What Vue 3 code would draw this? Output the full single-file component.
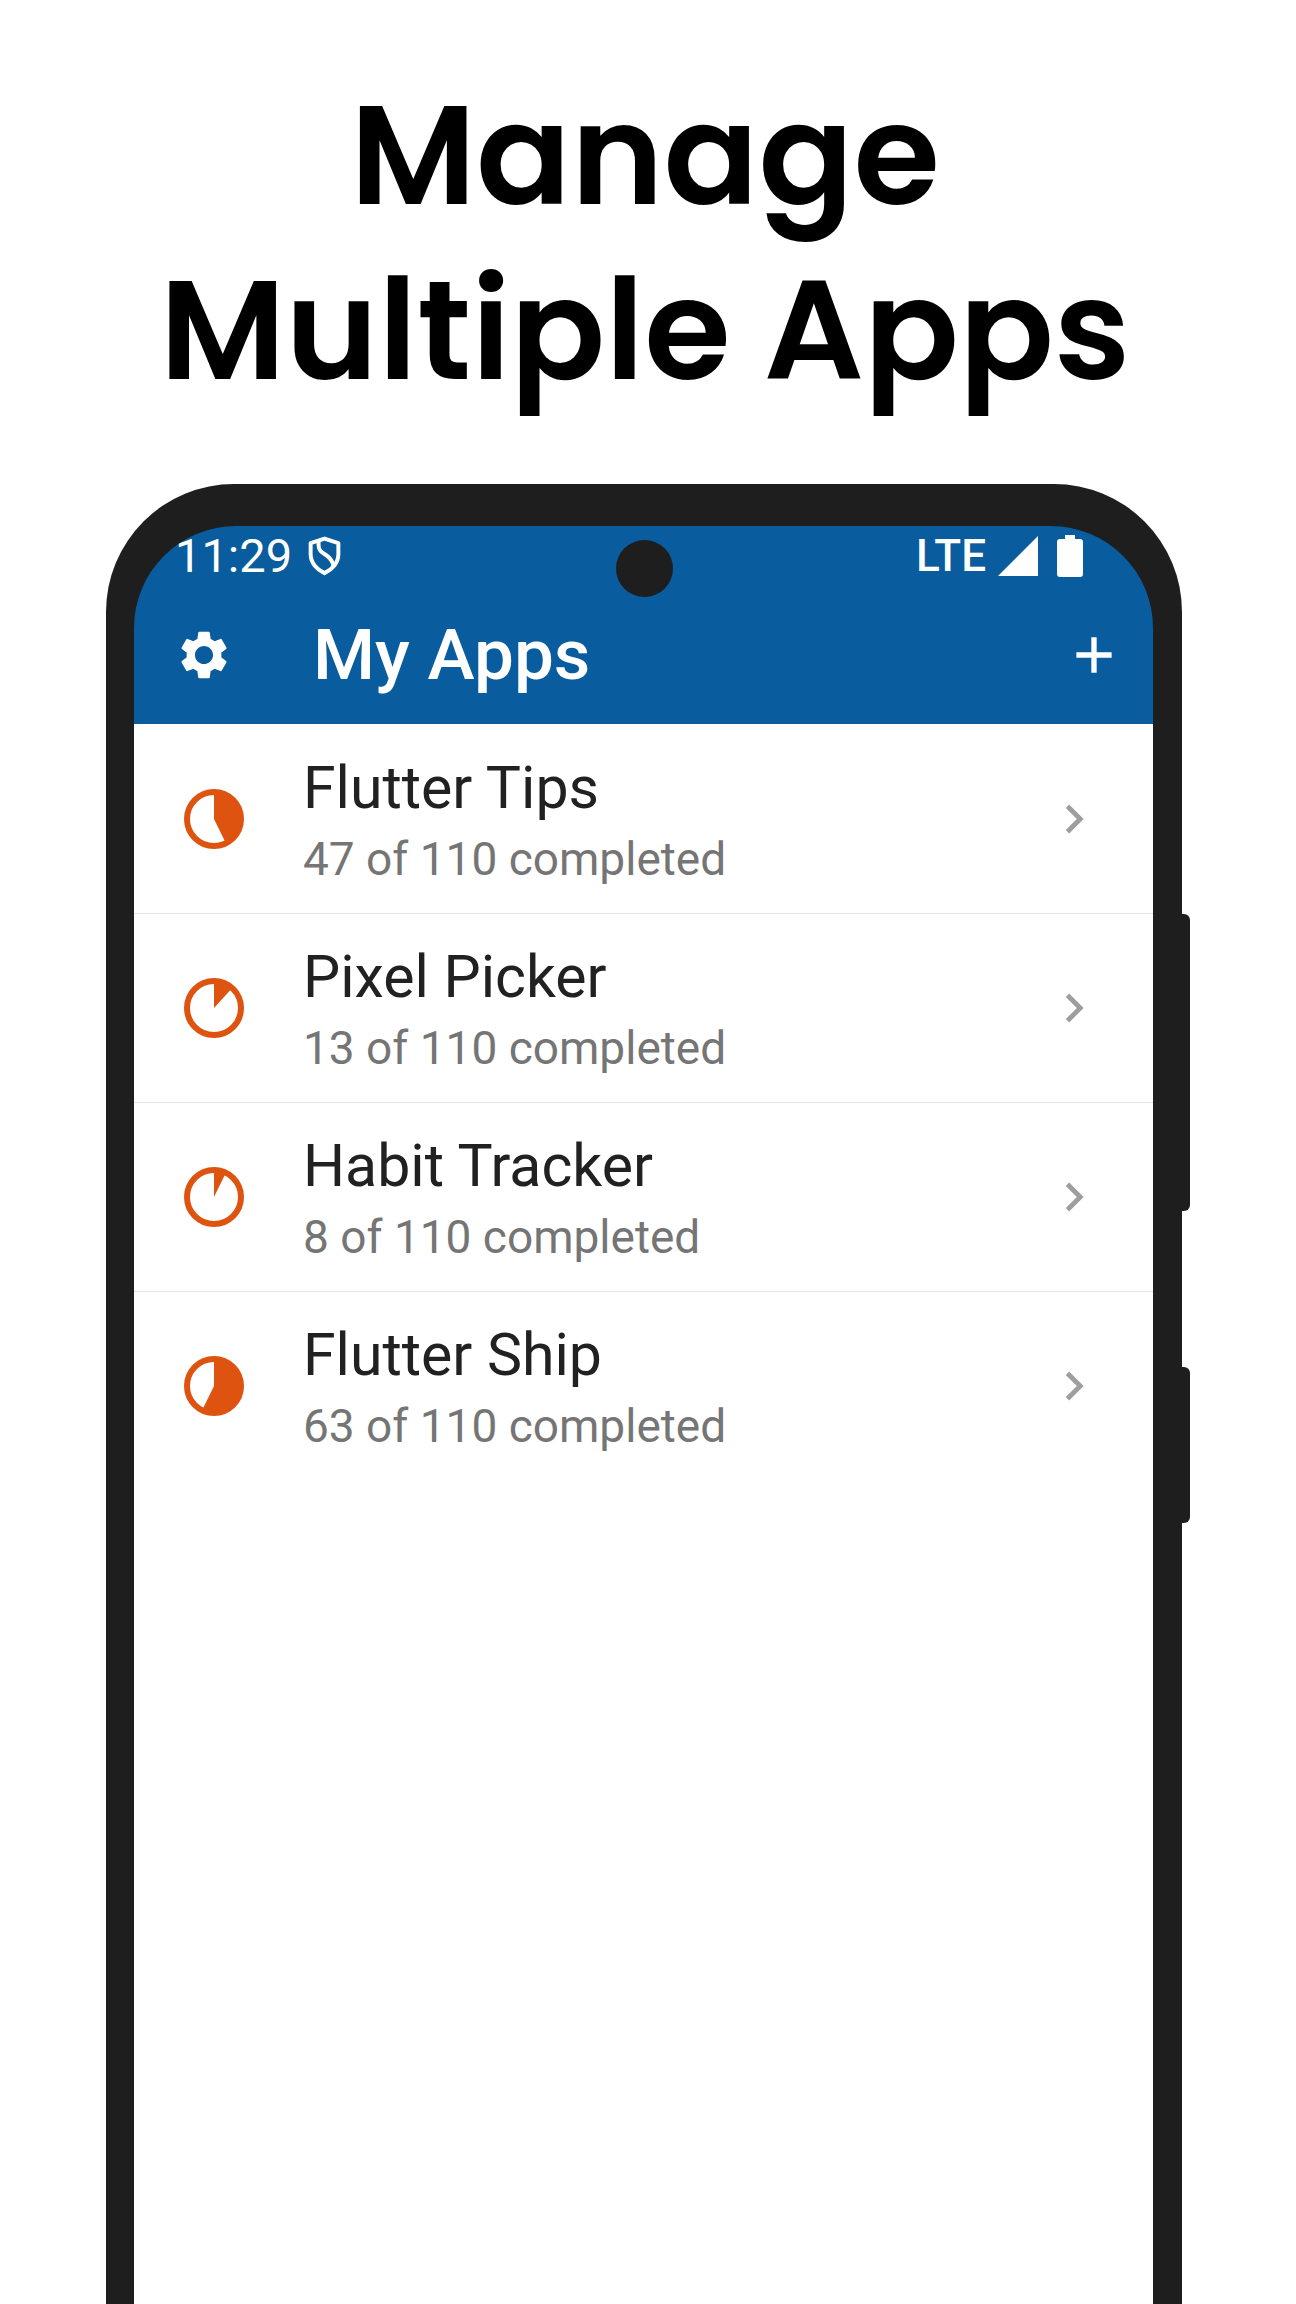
<script setup>
const total = 110
const apps = [
  { name: 'Flutter Tips', done: 47 },
  { name: 'Pixel Picker', done: 13 },
  { name: 'Habit Tracker', done: 8 },
  { name: 'Flutter Ship', done: 63 },
]

// Pie slice that starts at twelve o'clock and runs clockwise.
function slice(done) {
  const angle = (done / total) * 2 * Math.PI
  const x = 30 + 27 * Math.sin(angle)
  const y = 30 - 27 * Math.cos(angle)
  const large = angle > Math.PI ? 1 : 0
  return `M30 30V3A27 27 0 ${large} 1 ${x} ${y}Z`
}
</script>

<template>
  <main class="page">
    <h1 class="headline">Manage<br />Multiple Apps</h1>

    <div class="phone">
      <span class="side-key power"></span>
      <span class="side-key volume"></span>

      <div class="screen">
        <span class="camera"></span>

        <header class="top">
          <div class="status">
            <span class="time">11:29</span>
            <svg class="shield" viewBox="0 0 100 120" aria-hidden="true">
              <path d="M50 7L92 21V55C92 80 74 101 50 112C26 101 8 80 8 55V21Z" />
              <path d="M32 14V27C32 50 50 51 62 63C73 74 77 80 77 92" />
            </svg>
            <span class="network">LTE</span>
            <svg class="signal" viewBox="0 0 40 40" aria-hidden="true"><path d="M40 0V40H0Z" /></svg>
            <svg class="battery" viewBox="0 0 26 42" aria-hidden="true">
              <path d="M8 0H18V4H23Q26 4 26 7V39Q26 42 23 42H3Q0 42 0 39V7Q0 4 3 4H8Z" />
            </svg>
          </div>

          <div class="app-bar">
            <button class="icon-button" type="button" aria-label="Settings">
              <svg viewBox="0 0 24 24" aria-hidden="true">
                <path d="M19.14 12.94c.04-.3.06-.61.06-.94 0-.32-.02-.64-.07-.94l2.03-1.58c.18-.14.23-.41.12-.61l-1.92-3.32c-.12-.22-.37-.29-.59-.22l-2.39.96c-.5-.38-1.03-.7-1.62-.94l-.36-2.54c-.04-.24-.24-.41-.48-.41h-3.84c-.24 0-.43.17-.47.41l-.36 2.54c-.59.24-1.13.57-1.62.94l-2.39-.96c-.22-.08-.47 0-.59.22L2.74 8.87c-.12.21-.08.47.12.61l2.03 1.58c-.05.3-.09.63-.09.94s.02.64.07.94l-2.03 1.58c-.18.14-.23.41-.12.61l1.92 3.32c.12.22.37.29.59.22l2.39-.96c.5.38 1.03.7 1.62.94l.36 2.54c.05.24.24.41.48.41h3.84c.24 0 .44-.17.47-.41l.36-2.54c.59-.24 1.13-.56 1.62-.94l2.39.96c.22.08.47 0 .59-.22l1.92-3.32c.12-.22.07-.47-.12-.61l-2.01-1.58zM12 15.75c-2.07 0-3.75-1.68-3.75-3.75s1.68-3.75 3.75-3.75 3.75 1.68 3.75 3.75-1.68 3.75-3.75 3.75z" />
              </svg>
            </button>
            <h2 class="title">My Apps</h2>
            <button class="icon-button" type="button" aria-label="Add app">
              <svg viewBox="0 0 24 24" aria-hidden="true"><path d="M19.3 13.1h-6.2v6.2h-2.2v-6.2H4.7v-2.2h6.2V4.7h2.2v6.2h6.2z" /></svg>
            </button>
          </div>
        </header>

        <ul class="list">
          <li v-for="app in apps" :key="app.name">
            <button class="row" type="button">
              <svg class="pie" viewBox="0 0 60 60" aria-hidden="true">
                <circle cx="30" cy="30" r="27" />
                <path :d="slice(app.done)" />
              </svg>
              <span class="text">
                <span class="name">{{ app.name }}</span>
                <span class="progress">{{ app.done }} of {{ total }} completed</span>
              </span>
              <svg class="chevron" viewBox="0 0 24 24" aria-hidden="true">
                <path d="M10 6L8.59 7.41 13.17 12l-4.58 4.59L10 18l6-6z" />
              </svg>
            </button>
          </li>
        </ul>
      </div>
    </div>
  </main>
</template>

<style>
body {
  margin: 0;
  background: #fff;
}
</style>

<style scoped>
.page {
  box-sizing: border-box;
  min-height: 100vh;
  padding-top: 68px;
  display: flex;
  flex-direction: column;
  overflow: hidden;
  background: #fff;
  font-family: Roboto, "Liberation Sans", sans-serif;
}

.headline {
  margin: 0 114px 66px 108px;
  color: #000;
  font-family: Poppins, Inter, sans-serif;
  font-size: 140px;
  font-weight: 600;
  line-height: 175px;
  text-align: center;
}

.phone {
  position: relative;
  flex: 1;
  display: flex;
  margin: 0 114px 0 106px;
  padding: 42px 29px 0 28px;
  border-radius: 128px 128px 0 0;
  background: #1e1e1e;
}

.side-key {
  position: absolute;
  right: -8px;
  width: 20px;
  border-radius: 6px;
  background: #1e1e1e;
}

.power {
  top: 430px;
  height: 297px;
}

.volume {
  top: 883px;
  height: 156px;
}

.screen {
  position: relative;
  flex: 1;
  display: flex;
  flex-direction: column;
  min-width: 0;
  overflow: hidden;
  border-radius: 102px 102px 0 0;
}

.camera {
  position: absolute;
  top: 14px;
  left: 50%;
  width: 57px;
  height: 57px;
  margin-left: -28px;
  border-radius: 50%;
  background: #1e1e1e;
}

.top {
  background: #095c9e;
  color: #fff;
}

.top svg {
  fill: currentColor;
}

.status {
  display: flex;
  align-items: center;
  height: 60px;
  padding: 0 70px 0 41px;
}

.time {
  font-size: 47px;
  line-height: 60px;
}

.top .shield {
  width: 33px;
  height: 40px;
  margin-left: 16px;
  fill: none;
  stroke: currentColor;
  stroke-width: 12;
  stroke-linejoin: round;
}

.network {
  margin-left: auto;
  font-size: 44px;
  font-weight: 500;
  line-height: 60px;
}

.signal {
  width: 40px;
  height: 40px;
  margin-left: 12px;
}

.battery {
  width: 26px;
  height: 42px;
  margin-left: 19px;
}

.app-bar {
  display: flex;
  align-items: center;
  height: 138px;
  padding: 0 30px 0 41px;
}

.icon-button {
  width: 58px;
  height: 58px;
  padding: 0;
  border: 0;
  background: none;
  color: inherit;
  cursor: pointer;
}

.icon-button svg {
  display: block;
  width: 100%;
  height: 100%;
}

.title {
  flex: 1;
  margin: 0 0 0 80px;
  font-size: 71px;
  font-weight: 500;
  line-height: 80px;
}

.list {
  flex: 1;
  margin: 0;
  padding: 1px 0 0;
  background: #fff;
  list-style: none;
}

.list li + li {
  border-top: 1px solid #e6e6e6;
}

.row {
  display: flex;
  align-items: center;
  width: 100%;
  height: 188px;
  padding: 0 50px;
  border: 0;
  background: none;
  font-family: inherit;
  text-align: left;
  cursor: pointer;
}

.pie {
  width: 60px;
  height: 60px;
  fill: #de530f;
}

.pie circle {
  fill: none;
  stroke: #de530f;
  stroke-width: 6;
}

.text {
  flex: 1;
  display: flex;
  flex-direction: column;
  margin-left: 59px;
}

.name {
  color: #212121;
  font-size: 59px;
  line-height: 80px;
}

.progress {
  color: #757575;
  font-size: 46px;
  line-height: 62px;
}

.chevron {
  width: 58px;
  height: 58px;
  fill: #9e9e9e;
}
</style>
